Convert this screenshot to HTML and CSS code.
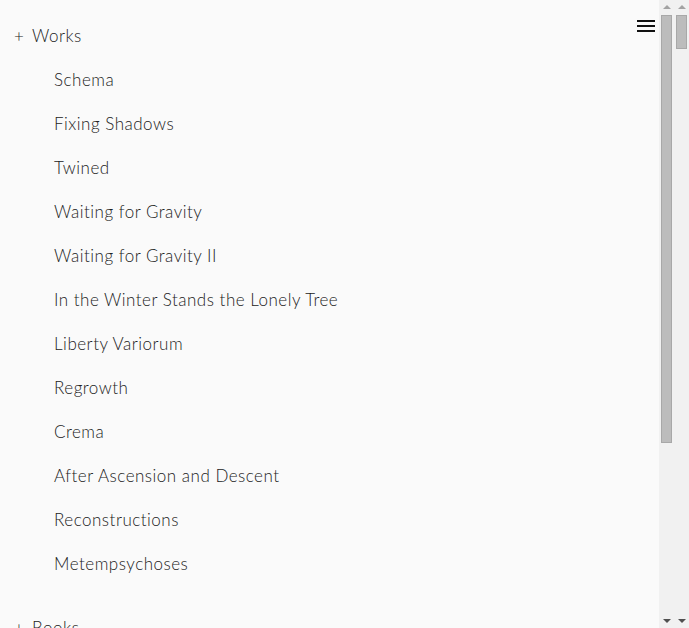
FILE: index.html
```html
<!DOCTYPE html>
<html lang="en">
<head>
<meta charset="utf-8">
<title>Works</title>
<link rel="stylesheet" href="styles.css">
</head>
<body>
<div class="frame">
  <nav class="menu">
    <ul class="groups">
      <li class="group">
        <a class="group-title" href="#"><span class="plus">+</span>Works</a>
        <ul class="items">
          <li><a href="#">Schema</a></li>
          <li><a href="#">Fixing Shadows</a></li>
          <li><a href="#">Twined</a></li>
          <li><a href="#">Waiting for Gravity</a></li>
          <li><a href="#">Waiting for Gravity II</a></li>
          <li><a href="#">In the Winter Stands the Lonely Tree</a></li>
          <li><a href="#">Liberty Variorum</a></li>
          <li><a href="#">Regrowth</a></li>
          <li><a href="#">Crema</a></li>
          <li><a href="#">After Ascension and Descent</a></li>
          <li><a href="#">Reconstructions</a></li>
          <li><a href="#">Metempsychoses</a></li>
        </ul>
      </li>
      <li class="group">
        <a class="group-title" href="#"><span class="plus">+</span>Books</a>
      </li>
      <li class="group">
        <a class="group-title" href="#"><span class="plus">+</span>News</a>
      </li>
      <li class="group">
        <a class="group-title" href="#"><span class="plus">+</span>About</a>
      </li>
    </ul>
    <button class="toggle" aria-label="Menu">
      <span></span><span></span><span></span>
    </button>
  </nav>
  <div class="scrollbar">
    <div class="sb-btn"><span class="arrow up"></span></div>
    <div class="sb-track"><div class="sb-thumb inner"></div></div>
    <div class="sb-btn"><span class="arrow down"></span></div>
  </div>
  <div class="scrollbar">
    <div class="sb-btn"><span class="arrow up"></span></div>
    <div class="sb-track"><div class="sb-thumb outer"></div></div>
    <div class="sb-btn"><span class="arrow down"></span></div>
  </div>
</div>
</body>
</html>
```

FILE: styles.css
```css
html, body {
  margin: 0;
  padding: 0;
  background: #fafafa;
}

body {
  font-family: "Lato", "Liberation Sans", sans-serif;
  color: #222;
}

.frame {
  display: flex;
  height: 100vh;
  overflow: hidden;
}

.menu {
  flex: 1;
  position: relative;
  overflow: hidden;
  background: #fafafa;
}

.groups {
  list-style: none;
  margin: 0;
  padding: 13px 0 60px 0;
}

.group {
  margin-bottom: 20px;
}

.group-title,
.items a {
  display: flex;
  align-items: center;
  height: 44px;
  color: #222;
  text-decoration: none;
  font-size: 17px;
  font-weight: 300;
  letter-spacing: 0.5px;
}

.group-title {
  padding-left: 14px;
}

.plus {
  width: 18px;
}

.items {
  list-style: none;
  margin: 0;
  padding: 0 0 0 54px;
}

.toggle {
  position: absolute;
  top: 20px;
  right: 4px;
  width: 18px;
  height: 12px;
  padding: 0;
  border: 0;
  background: transparent;
  display: flex;
  flex-direction: column;
  justify-content: space-between;
  cursor: pointer;
}

.toggle span {
  display: block;
  height: 2px;
  background: #111;
}

/* drawn scrollbars */
.scrollbar {
  width: 15px;
  flex: none;
  background: #f1f1f1;
  display: flex;
  flex-direction: column;
}

.sb-btn {
  height: 14px;
  display: flex;
  align-items: center;
  justify-content: center;
  flex: none;
}

.arrow {
  width: 0;
  height: 0;
  border-left: 4px solid transparent;
  border-right: 4px solid transparent;
}

.arrow.up {
  border-bottom: 4px solid #a3a3a3;
}

.arrow.down {
  border-top: 4px solid #505050;
}

.sb-track {
  flex: 1;
  padding: 1px 2px 0 2px;
}

.sb-thumb {
  background: #bcbcbc;
  border: 1px solid #a8a8a8;
  box-sizing: border-box;
}

.sb-thumb.inner {
  height: 428px;
}

.sb-thumb.outer {
  height: 34px;
}
```
